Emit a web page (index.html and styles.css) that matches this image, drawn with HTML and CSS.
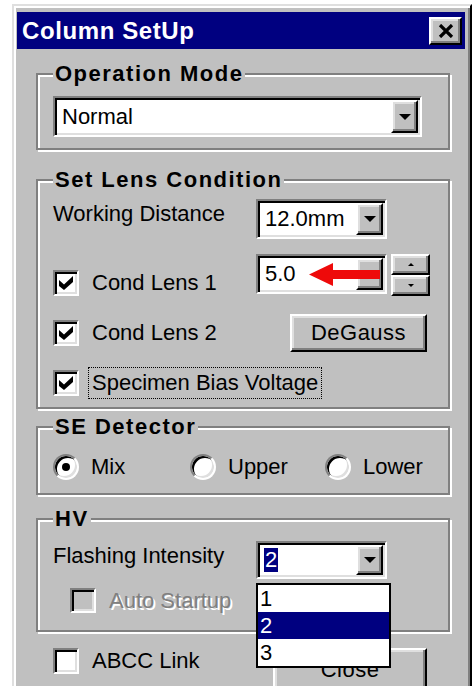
FILE: index.html
```html
<!DOCTYPE html>
<html lang="en">
<head>
<meta charset="utf-8">
<title>Column SetUp</title>
<link rel="stylesheet" href="styles.css">
</head>
<body>
<div class="window">
  <div class="titlebar">
    <span class="title">Column SetUp</span>
    <span class="btn close-x">
      <svg width="16" height="14" viewBox="0 0 16 14"><path d="M2 1 L14 13 M14 1 L2 13" stroke="#000" stroke-width="3.2"/></svg>
    </span>
  </div>

  <div class="client">
    <fieldset class="group g-op">
      <legend>Operation Mode</legend>
      <div class="combo combo-wide"><span class="val">Normal</span><span class="btn drop"><i class="tri"></i></span></div>
    </fieldset>

    <fieldset class="group g-lens">
      <legend>Set Lens Condition</legend>
      <div class="row r-wd">
        <span class="lbl">Working Distance</span>
        <div class="combo"><span class="val">12.0mm</span><span class="btn drop"><i class="tri"></i></span></div>
      </div>
      <div class="row r-cl1">
        <label class="check"><span class="box"><svg width="14" height="14" viewBox="0 0 14 14"><path d="M0 4 L5 8.5 L14 0 L14 6 L5 14 L0 10 Z" fill="#000"/></svg></span><span class="txt">Cond Lens 1</span></label>
        <div class="combo combo-lens">
          <span class="val">5.0</span><span class="btn drop"><i class="tri"></i></span>
          <svg class="pointer" width="71" height="23" viewBox="0 0 71 23"><path d="M0 11.5 L24 0 L24 7 L71 7 L71 16 L24 16 L24 23 Z" fill="#ee0a0a"/></svg>
        </div>
        <div class="spin">
          <span class="btn spin-b"><i class="tri-s up"></i></span>
          <span class="btn spin-b"><i class="tri-s"></i></span>
        </div>
      </div>
      <div class="row r-cl2">
        <label class="check"><span class="box"><svg width="14" height="14" viewBox="0 0 14 14"><path d="M0 4 L5 8.5 L14 0 L14 6 L5 14 L0 10 Z" fill="#000"/></svg></span><span class="txt">Cond Lens 2</span></label>
        <span class="btn push degauss">DeGauss</span>
      </div>
      <div class="row r-sbv">
        <label class="check"><span class="box"><svg width="14" height="14" viewBox="0 0 14 14"><path d="M0 4 L5 8.5 L14 0 L14 6 L5 14 L0 10 Z" fill="#000"/></svg></span><span class="txt focus">Specimen Bias Voltage</span></label>
      </div>
    </fieldset>

    <fieldset class="group g-se">
      <legend>SE Detector</legend>
      <div class="radios">
        <label class="radio"><span class="dot on"></span><span class="txt">Mix</span></label>
        <label class="radio"><span class="dot"></span><span class="txt">Upper</span></label>
        <label class="radio"><span class="dot"></span><span class="txt">Lower</span></label>
      </div>
    </fieldset>

    <fieldset class="group g-hv">
      <legend>HV</legend>
      <div class="row r-flash">
        <span class="lbl">Flashing Intensity</span>
        <div class="combo combo-flash">
          <span class="val"><span class="sel">2</span></span><span class="btn drop"><i class="tri"></i></span>
          <ul class="listbox">
            <li>1</li>
            <li class="hi">2</li>
            <li>3</li>
          </ul>
        </div>
      </div>
      <div class="row r-auto">
        <label class="check disabled"><span class="box"></span><span class="txt">Auto Startup</span></label>
      </div>
    </fieldset>

    <div class="row r-foot">
      <label class="check"><span class="box"></span><span class="txt">ABCC Link</span></label>
      <span class="btn push close-btn">Close</span>
    </div>
  </div>
</div>
</body>
</html>
```

FILE: styles.css
```css
* { box-sizing: border-box; }

html, body {
  margin: 0;
  height: 100%;
  overflow: hidden;
  background: #fff;
}

body {
  font-family: "Liberation Sans", Arial, sans-serif;
  font-size: 22px;
  color: #000;
}

/* dialog frame */
.window {
  margin: 4px 0 0 12px;
  width: 460px;
  height: 720px;
  background: #c0c0c0;
  border: 2px solid;
  border-color: #dfdfdf #000 #000 #dfdfdf;
  box-shadow: inset 2px 2px #fff, inset -2px -2px #808080;
  padding: 6px 5px 0 3px;
}

.titlebar {
  height: 37px;
  background: #000080;
  display: flex;
  align-items: center;
  justify-content: space-between;
  padding: 0 3px 0 5px;
}

.title {
  color: #fff;
  font-weight: bold;
  font-size: 24px;
  letter-spacing: 0.6px;
  line-height: 1;
}

/* raised 3d surface */
.btn {
  flex: none;
  background: #c0c0c0;
  border: 2px solid;
  border-color: #fff #000 #000 #fff;
  box-shadow: inset -2px -2px #808080, inset 2px 2px #dfdfdf;
  display: flex;
  align-items: center;
  justify-content: center;
}

.close-x { width: 33px; height: 28px; }

.client {
  padding: 11px 15px 0 19px;
}

/* etched group boxes */
.group {
  margin: 0;
  min-width: 0;
  border: 2px solid #808080;
  box-shadow: inset 2px 2px #fff, 2px 2px #fff;
  padding: 8px 8px 11px 15px;
}

.group legend {
  font-weight: bold;
  line-height: 28px;
  padding: 0 2px;
  letter-spacing: 1.5px;
  background: #c0c0c0;
}

.g-lens { margin-top: 16px; padding-top: 5px; padding-bottom: 8px; }
.g-se { margin-top: 4px; padding-top: 12px; padding-bottom: 16px; }
.g-hv { margin-top: 10px; padding-top: 8px; padding-bottom: 17px; }

/* combo boxes */
.combo {
  position: relative;
  flex: none;
  display: flex;
  width: 131px;
  height: 40px;
  background: #fff;
  border: 2px solid;
  border-color: #808080 #fff #fff #808080;
  box-shadow: inset 2px 2px #000, inset -2px -2px #dfdfdf;
  padding: 2px;
}

.combo-wide { width: 369px; height: 41px; }

.combo .val {
  flex: 1;
  display: flex;
  align-items: center;
  padding-left: 5px;
  line-height: 1;
}

.drop { width: 27px; }

.tri {
  width: 0;
  height: 0;
  border-left: 6px solid transparent;
  border-right: 6px solid transparent;
  border-top: 6px solid #000;
}

.pointer {
  position: absolute;
  left: 51px;
  top: 7px;
}

/* rows */
.row { display: flex; }

.lbl {
  flex: none;
  width: 203px;
  line-height: 28px;
}

.r-wd { height: 40px; }
.r-wd .lbl { margin-top: 1px; }

.r-cl1 { margin-top: 15px; height: 43px; }
.r-cl1 .check { width: 203px; align-self: flex-end; }
.combo-lens { height: 40px; }

.spin {
  flex: none;
  margin-left: 4px;
  width: 39px;
  display: flex;
  flex-direction: column;
}

.spin-b { height: 21px; }

.tri-s {
  width: 0;
  height: 0;
  border-left: 3px solid transparent;
  border-right: 3px solid transparent;
  border-top: 3px solid #000;
}

.tri-s.up { border-top: 0; border-bottom: 3px solid #000; }

.r-cl2 { margin-top: 17px; height: 38px; align-items: center; }
.r-cl2 .check { width: 237px; }

.push {
  font-size: 22px;
  letter-spacing: 0.5px;
}

.degauss { width: 137px; height: 38px; }

.r-sbv { margin-top: 15px; height: 32px; align-items: center; }

/* check boxes */
.check {
  flex: none;
  display: flex;
  align-items: center;
}

.box {
  width: 26px;
  height: 26px;
  flex: none;
  background: #fff;
  border: 2px solid;
  border-color: #808080 #fff #fff #808080;
  box-shadow: inset 2px 2px #000, inset -2px -2px #dfdfdf;
  display: flex;
  align-items: center;
  justify-content: center;
}

.check .txt {
  margin-left: 13px;
  line-height: 28px;
}

.check .focus {
  margin-left: 9px;
  border: 1px dotted #000;
  padding: 1px 3px 1px 3px;
  line-height: 28px;
}

.check.disabled .box { background: #c0c0c0; }

.check.disabled .txt {
  color: #808080;
  text-shadow: 2px 2px 0 #fff;
}

/* radio buttons */
.radios {
  display: grid;
  grid-template-columns: 137px 135px auto;
  height: 24px;
  align-items: center;
}

.radio {
  display: flex;
  align-items: center;
}

.dot {
  flex: none;
  width: 26px;
  height: 26px;
  border-radius: 50%;
  background: #fff;
  border: 2px solid;
  border-color: #808080 #fff #fff #808080;
  box-shadow: inset 2px 2px #000, inset -2px -2px #dfdfdf;
  display: flex;
  align-items: center;
  justify-content: center;
}

.dot.on::after {
  content: "";
  width: 8px;
  height: 8px;
  border-radius: 50%;
  background: #000;
}

.radio .txt {
  margin-left: 12px;
  line-height: 28px;
}

/* HV group */
.r-flash { height: 38px; }
.r-flash .lbl { margin-top: 1px; }
.combo-flash { height: 38px; }

.sel {
  background: #000080;
  color: #fff;
  padding: 0 1px;
  line-height: 24px;
}

.combo-flash .val { padding-left: 4px; }

.listbox {
  position: absolute;
  z-index: 5;
  left: -2px;
  top: 40px;
  width: 135px;
  margin: 0;
  padding: 0;
  list-style: none;
  background: #fff;
  border: 2px solid #000;
}

.listbox li {
  height: 27px;
  line-height: 27px;
  padding-left: 2px;
}

.listbox li.hi {
  background: #000080;
  color: #fff;
}

.r-auto { margin-top: 9px; height: 25px; padding-left: 17px; align-items: center; }
.r-auto .box { width: 26px; height: 25px; }

/* footer row */
.r-foot {
  margin-top: 16px;
  padding-left: 17px;
  align-items: flex-start;
}

.r-foot .check { width: 220px; height: 26px; }

.close-btn {
  width: 154px;
  height: 46px;
  padding-bottom: 2px;
}
```
